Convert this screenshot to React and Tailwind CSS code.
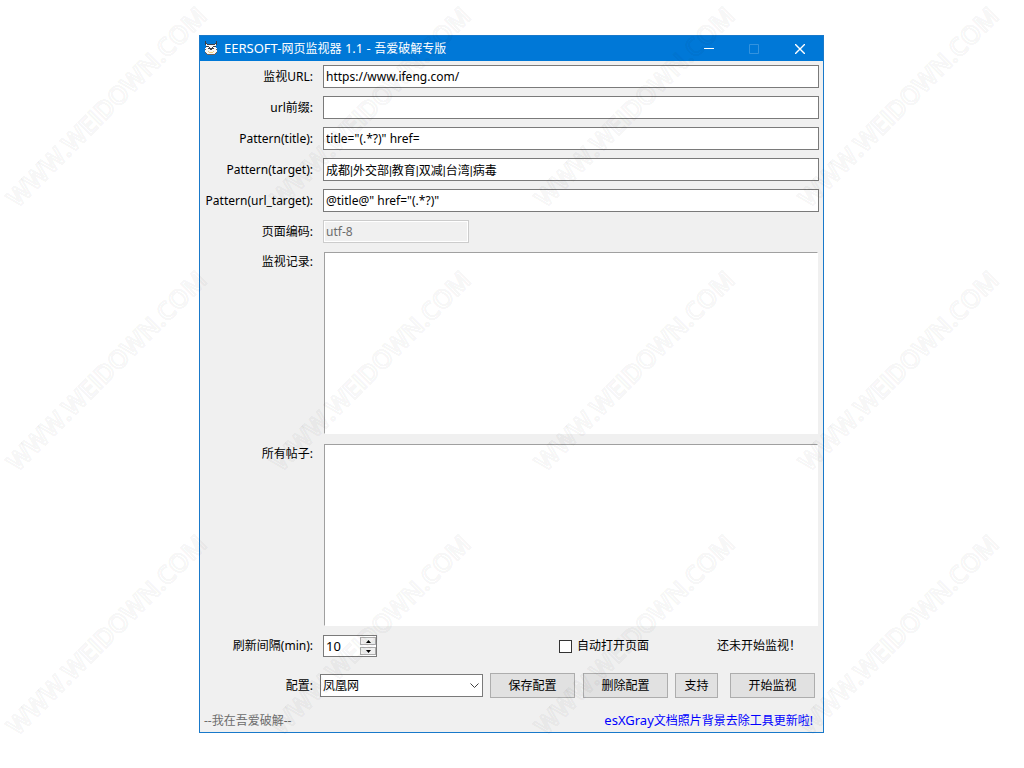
import React, {useState} from "react";

const watermarkTiles = Array.from({length: 12}, (_, i) => i)

const Watermark = () => {
    return (
        <div aria-hidden="true" className="pointer-events-none absolute inset-0 z-10 overflow-hidden">
            <div className="grid grid-cols-[repeat(4,264px)] auto-rows-[264px]">
                {watermarkTiles.map(i => (
                    <div key={i} className="flex h-[212px] w-[212px] items-center justify-center">
                        <span className="-rotate-45 whitespace-nowrap font-['Open_Sans',sans-serif] text-[25px] leading-8 font-semibold text-transparent [-webkit-text-stroke:2px_rgba(0,0,0,0.05)]">
                            WWW.WEIDOWN.COM
                        </span>
                    </div>
                ))}
            </div>
        </div>
    )
}

const OwlIcon = () => (
    <svg width="14" height="16" viewBox="0 0 14 16" shapeRendering="crispEdges" aria-hidden="true">
        <path d="M2 3h10v4h1v5h-1v1h-1v1h-8v-1h-1v-1h-1v-5h1z" fill="#f6f6f6"/>
        <path d="M1 0h1v2h1v1h8v-1h1v-2h1v4h-1v-1h-1v1h-8v-1h-1v1h-1z" fill="#3c4048"/>
        <path d="M2 5h3v1h1v1h2v-1h1v-1h3v1h-1v1h-1v1h-2v1h-2v-1h-2v-1h-1v-1h-1z" fill="#3c4048"/>
        <path d="M3 6h2v1h-2zM9 6h2v1h-2z" fill="#fff"/>
        <path d="M1 8h1v1h-1zM12 8h1v1h-1zM1 11h1v1h-1zM12 11h1v1h-1zM2 12h1v1h-1zM11 12h1v1h-1zM3 13h8v1h-8z" fill="#6b6058"/>
        <path d="M4 10h1v1h-1zM9 10h1v1h-1zM5 11h4v1h-4z" fill="#f3cf7a"/>
    </svg>
)

const TitleBar = () => {
    return (
        <header className="flex h-[25px] items-center bg-[#0078d7] pl-1 text-white">
            <OwlIcon/>
            <h1 className="ml-1.5 flex-1">
                <span className="text-[13px]">EERSOFT-</span>网页监视器<span className="text-[13px]"> 1.1 - </span>吾爱破解专版
            </h1>
            <button type="button" aria-label="最小化" className="flex h-full w-[45px] items-center justify-center">
                <svg width="10" height="10" viewBox="0 0 10 10"><path d="M0 4.5h10" stroke="#fff"/></svg>
            </button>
            <button type="button" aria-label="最大化" disabled className="flex h-full w-[45px] items-center justify-center">
                <svg width="10" height="10" viewBox="0 0 10 10"><path d="M.5.5h9v9h-9z" fill="none" stroke="#3393df"/></svg>
            </button>
            <button type="button" aria-label="关闭" className="flex h-full w-[47px] items-center justify-center">
                <svg width="10" height="10" viewBox="0 0 10 10"><path d="M0 0l10 10M10 0L0 10" stroke="#fff" strokeWidth="1.4"/></svg>
            </button>
        </header>
    )
}

const TextRow = ({id, label, value, disabled, className = ""}) => {
    const [text, setText] = useState(value)

    return (
        <div className="flex items-center gap-2.5">
            <label htmlFor={id} className="w-[113px] shrink-0 text-right">{label}</label>
            {disabled ?
                <input id={id} type="text" disabled value={text} readOnly
                       className="h-[23px] w-[146px] border border-[#cccccc] bg-[#f0f0f0] px-0.5 text-[#6d6d6d] shadow-[inset_0_0_0_1px_#fff]"/>
                :
                <input id={id} type="text" value={text} onChange={(e) => setText(e.target.value)}
                       className={"h-[23px] min-w-0 flex-1 border border-[#7a7a7a] bg-white px-0.5 outline-none " + className}/>
            }
        </div>
    )
}

const LogRow = ({id, label}) => (
    <div className="flex items-start gap-[11px] pr-px">
        <label htmlFor={id} className="w-[113px] shrink-0 pt-0.5 text-right">{label}</label>
        <textarea id={id} className="h-[182px] min-w-0 flex-1 resize-none border border-[#a0a0a0] border-r-white border-b-white bg-white px-0.5 outline-none"/>
    </div>
)

const PushButton = ({children, className}) => (
    <button type="button" className={"h-[25px] border border-[#adadad] bg-[#e1e1e1] " + className}>{children}</button>
)

const Interval = () => {
    const [minutes, setMinutes] = useState(10)

    return (
        <div className="flex h-[22px] w-[54px] border border-[#7a7a7a] bg-white">
            <input id="interval" type="number" value={minutes} onChange={(e) => setMinutes(Number(e.target.value))}
                   className="w-9 appearance-none pl-0.5 text-[13px] leading-4 outline-none [-moz-appearance:textfield] [&::-webkit-inner-spin-button]:appearance-none"/>
            <div className="flex w-4 flex-col justify-between py-px">
                <button type="button" aria-label="增加" onClick={() => setMinutes(minutes + 1)}
                        className="flex h-2 items-center justify-center border border-[#adadad] bg-[#f0f0f0]">
                    <svg width="5" height="3" viewBox="0 0 5 3"><path d="M0 3L2.5 0 5 3z"/></svg>
                </button>
                <button type="button" aria-label="减少" onClick={() => setMinutes(minutes - 1)}
                        className="flex h-2 items-center justify-center border border-[#adadad] bg-[#f0f0f0]">
                    <svg width="5" height="3" viewBox="0 0 5 3"><path d="M0 0h5L2.5 3z"/></svg>
                </button>
            </div>
        </div>
    )
}

export default function App() {
    return (
        <div className="relative min-h-screen bg-white pt-[35px] pr-px font-['Noto_Sans','Noto_Sans_CJK_SC',sans-serif] text-xs text-black">
            <main className="mx-auto w-full max-w-[625px] border border-[#1979ca] bg-[#f0f0f0]">
                <TitleBar/>
                <form onSubmit={(e) => e.preventDefault()} className="flex flex-col pt-1 pr-1">
                    <div className="flex flex-col gap-2">
                        <TextRow id="url" label="监视URL:" value="https://www.ifeng.com/"/>
                        <TextRow id="prefix" label="url前缀:" value=""/>
                        <TextRow id="title" label="Pattern(title):" value={'title="(.*?)" href='}/>
                        {/* Roboto keeps the | separators narrow */}
                        <TextRow id="target" label="Pattern(target):" value="成都|外交部|教育|双减|台湾|病毒"
                                 className="font-['Roboto','Noto_Sans_CJK_SC',sans-serif]"/>
                        <TextRow id="url-target" label="Pattern(url_target):" value={'@title@" href="(.*?)"'}/>
                        <TextRow id="encoding" label="页面编码:" value="utf-8" disabled/>
                    </div>
                    <div className="mt-[9px] flex flex-col gap-2.5">
                        <LogRow id="log" label="监视记录:"/>
                        <LogRow id="posts" label="所有帖子:"/>
                    </div>
                    <div className="mt-[9px] flex items-center gap-2.5 pr-[18px]">
                        <label htmlFor="interval" className="w-[113px] shrink-0 text-right">刷新间隔(min):</label>
                        <Interval/>
                        <label className="ml-auto flex items-center gap-[5px]">
                            <input type="checkbox" className="h-[13px] w-[13px] appearance-none border border-[#333333] bg-white checked:bg-[#0078d7]"/>
                            自动打开页面
                        </label>
                        <p className="ml-[58px]">还未开始监视！</p>
                    </div>
                    <div className="mt-4 flex items-center pr-1">
                        <label htmlFor="config" className="w-[113px] shrink-0 text-right">配置:</label>
                        <div className="relative ml-[7px] min-w-0 flex-1">
                            <select id="config" className="block h-[23px] w-full appearance-none border border-[#7a7a7a] bg-white pl-0.5 outline-none">
                                <option>凤凰网</option>
                            </select>
                            <svg className="pointer-events-none absolute top-[9px] right-1" width="9" height="6" viewBox="0 0 9 6">
                                <path d="M.5.5l4 4 4-4" fill="none" stroke="#404040"/>
                            </svg>
                        </div>
                        <PushButton className="ml-[7px] w-[85px]">保存配置</PushButton>
                        <PushButton className="ml-2 w-[85px]">删除配置</PushButton>
                        <PushButton className="ml-[7px] w-[43px]">支持</PushButton>
                        <PushButton className="ml-3 w-[85px]">开始监视</PushButton>
                    </div>
                </form>
                <footer className="flex h-[34px] items-end justify-between pr-2.5 pb-[3px] pl-1">
                    <p className="text-[#6d6d6d]">--我在吾爱破解--</p>
                    <a href="#" className="text-[#0000ff]"><span className="text-[13px]">esXGray</span>文档照片背景去除工具更新啦!</a>
                </footer>
            </main>
            <Watermark/>
        </div>
    )
}
